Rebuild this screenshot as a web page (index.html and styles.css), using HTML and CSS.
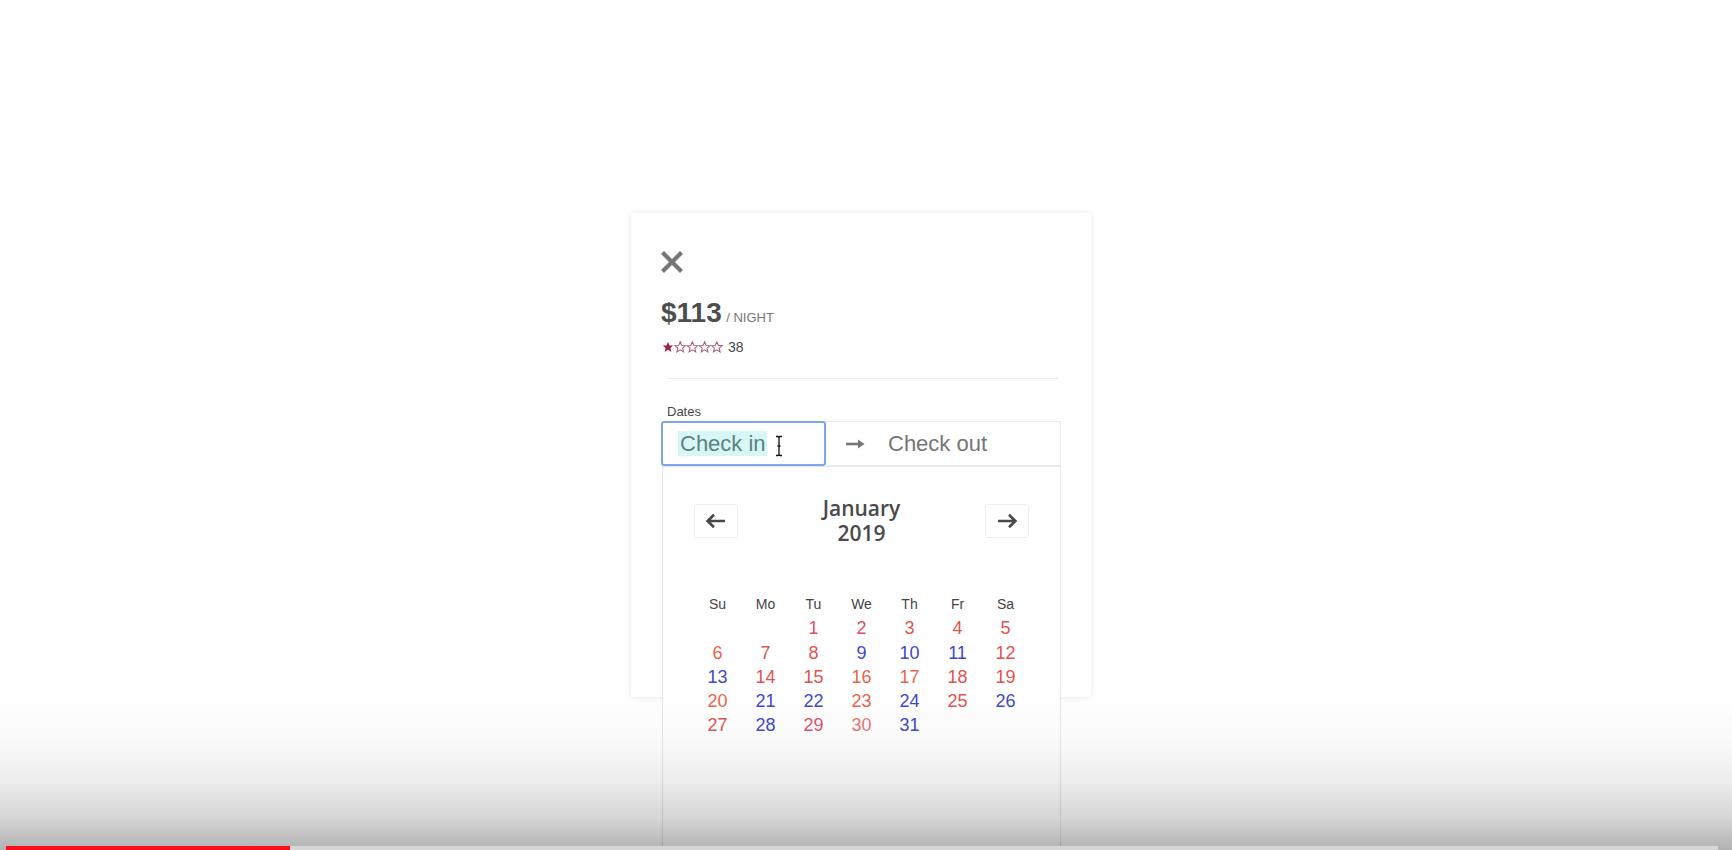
FILE: index.html
```html
<!DOCTYPE html>
<html>
<head>
<meta charset="utf-8">
<link rel="stylesheet" href="styles.css">
</head>
<body>
<div class="stage">
  <div class="card">
    <svg class="close" width="24" height="24" viewBox="0 0 24 24"><path d="M4 4 L20 20 M20 4 L4 20" stroke="#767676" stroke-width="4.2" stroke-linecap="square" fill="none"/></svg>
    <div class="price-line"><span class="price">$113</span> <span class="per">/ night</span></div>
    <div class="rating">
      <svg class="stars" width="61" height="12" viewBox="0 0 61 12">
        <defs><path id="st" d="M6 0.8 L7.5 4.4 L11.3 4.6 L8.4 7.1 L9.3 10.9 L6 8.8 L2.7 10.9 L3.6 7.1 L0.7 4.6 L4.5 4.4 Z"/></defs>
        <use href="#st" x="0" fill="#a3214f"/>
        <use href="#st" x="12.2" fill="none" stroke="#a8607a" stroke-width="1.05"/>
        <use href="#st" x="24.4" fill="none" stroke="#a8607a" stroke-width="1.05"/>
        <use href="#st" x="36.6" fill="none" stroke="#a8607a" stroke-width="1.05"/>
        <use href="#st" x="48.8" fill="none" stroke="#a8607a" stroke-width="1.05"/>
      </svg>
      <span class="count">38</span>
    </div>
    <div class="sep"></div>
    <div class="label">Dates</div>
    <div class="range">
      <div class="field checkin"><span class="sel">Check in</span></div>
      <div class="field checkout">
        <svg width="19" height="10" viewBox="0 0 19 10"><path d="M0 5 H14" stroke="#757575" stroke-width="2.6"/><path d="M12 0.5 L18.5 5 L12 9.5 Z" fill="#757575"/></svg>
        <span class="ph">Check out</span>
      </div>
      <svg class="ibeam" width="8" height="22" viewBox="0 0 8 22"><path d="M1 1.5 H3 Q4 1.5 4 3 Q4 1.5 5 1.5 H7 M4 3 V19 M1 20.5 H3 Q4 20.5 4 19 Q4 20.5 5 20.5 H7 M2 11 H6" stroke="#fff" stroke-width="3" fill="none"/><path d="M1 1.5 H3 Q4 1.5 4 3 Q4 1.5 5 1.5 H7 M4 3 V19 M1 20.5 H3 Q4 20.5 4 19 Q4 20.5 5 20.5 H7 M2.5 11 H5.5" stroke="#111" stroke-width="1.3" fill="none"/></svg>
      <div class="popup">
        <div class="cal-head">
          <div class="nav"><svg width="22" height="16" viewBox="0 0 22 16"><path d="M20 8 H3 M9 1.8 L2.6 8 L9 14.2" stroke="#484848" stroke-width="2.6" fill="none"/></svg></div>
          <div class="month"><span>January</span><span>2019</span></div>
          <div class="nav"><svg width="22" height="16" viewBox="0 0 22 16"><path d="M2 8 H19 M13 1.8 L19.4 8 L13 14.2" stroke="#484848" stroke-width="2.6" fill="none"/></svg></div>
        </div>
        <div class="grid">
          <span class="wd">Su</span><span class="wd">Mo</span><span class="wd">Tu</span><span class="wd">We</span><span class="wd">Th</span><span class="wd">Fr</span><span class="wd">Sa</span>
          <span></span><span></span>
          <span class="r1">1</span><span class="r1">2</span><span class="r2">3</span><span class="r2">4</span><span class="r2">5</span>
          <span class="r3">6</span><span class="r2">7</span><span class="r2">8</span><span class="b">9</span><span class="b">10</span><span class="b">11</span><span class="r2">12</span>
          <span class="b">13</span><span class="r2">14</span><span class="r2">15</span><span class="r3">16</span><span class="r3">17</span><span class="r2">18</span><span class="r2">19</span>
          <span class="r3">20</span><span class="b">21</span><span class="b">22</span><span class="r3">23</span><span class="b">24</span><span class="r2">25</span><span class="b">26</span>
          <span class="r2">27</span><span class="b">28</span><span class="r1">29</span><span class="r4">30</span><span class="b">31</span>
        </div>
      </div>
    </div>
  </div>
</div>
<div class="shade"></div>
<div class="progress"><div class="played"></div></div>
</body>
</html>
```
FILE: styles.css
```css
html, body {
  margin: 0;
  padding: 0;
}
body {
  width: 1732px;
  height: 850px;
  overflow: hidden;
  background: #fff;
  font-family: "Liberation Sans", Arial, sans-serif;
  color: #484848;
  position: relative;
}
.stage {
  padding: 213px 0 0 631px;
}
.card {
  width: 460px;
  height: 484px;
  box-sizing: border-box;
  padding: 37px 32px 0 30px;
  background: #fff;
  box-shadow: 0 0 6px rgba(0, 0, 0, 0.1);
}
.close {
  display: block;
  width: 24px;
  height: 24px;
  margin-left: -1px;
}
.price-line {
  margin-top: 23px;
  line-height: 32px;
  white-space: nowrap;
}
.price {
  font-size: 28px;
  font-weight: bold;
  color: #4e4e4e;
}
.per {
  font-size: 13px;
  text-transform: uppercase;
  color: #767676;
}
.rating {
  margin-top: 4px;
  height: 18px;
  display: flex;
  align-items: center;
  gap: 5px;
}
.stars {
  display: block;
  margin-left: 1px;
}
.count {
  font-size: 14px;
  line-height: 18px;
  color: #484848;
}
.sep {
  margin: 22px 1px 0 6px;
  height: 1px;
  background: #ebebeb;
}
.label {
  margin-top: 25px;
  padding-left: 6px;
  font-size: 13px;
  line-height: 16px;
  color: #484848;
}
.range {
  position: relative;
  width: 400px;
  display: flex;
  margin-top: 1px;
}
.field {
  height: 45px;
  box-sizing: border-box;
  display: flex;
  align-items: center;
  font-size: 22px;
}
.checkin {
  width: 165px;
  border: 2px solid #7ea4ec;
  border-radius: 3px;
  padding-left: 15px;
}
.sel {
  background: #d8f6f6;
  color: #5a8282;
  line-height: 25px;
  padding: 0 1px 0 2px;
}
.checkout {
  flex: 1;
  border: 1px solid #ebebeb;
  border-left: none;
  padding-left: 20px;
  gap: 23px;
}
.checkout svg {
  display: block;
}
.ph {
  color: #757575;
}
.ibeam {
  position: absolute;
  left: 114px;
  top: 14px;
}
.popup {
  position: absolute;
  left: 1px;
  top: 45px;
  width: 399px;
  height: 420px;
  box-sizing: border-box;
  border: 1px solid #e6e6e6;
  background: #fff;
  padding: 29px 31px 0 31px;
}
.cal-head {
  display: flex;
  justify-content: space-between;
  align-items: center;
}
.nav {
  width: 44px;
  height: 34px;
  box-sizing: border-box;
  border: 1px solid #efefef;
  border-radius: 3px;
  display: flex;
  align-items: center;
  justify-content: center;
}
.nav svg {
  display: block;
}
.month {
  display: flex;
  flex-direction: column;
  align-items: center;
  font-family: "Open Sans", "Liberation Sans", sans-serif;
  font-size: 21px;
  font-weight: 600;
  line-height: 25px;
  color: #4a4a4a;
}
.grid {
  margin-top: 46px;
  display: grid;
  grid-template-columns: repeat(7, 48px);
  grid-auto-rows: 24.3px;
  justify-content: center;
  margin-left: -1px;
  margin-right: -1px;
}
.grid span {
  text-align: center;
  font-size: 18px;
  line-height: 24px;
}
.grid .wd {
  font-size: 14px;
  color: #444;
}
.r1 { color: #dc5268; }
.r2 { color: #e05450; }
.r3 { color: #e9644c; }
.r4 { color: #e77474; }
.b { color: #3e48cc; }
.shade {
  position: absolute;
  left: 0;
  top: 690px;
  width: 1732px;
  height: 160px;
  pointer-events: none;
  background: linear-gradient(to bottom,
    rgba(0, 0, 0, 0) 0%,
    rgba(0, 0, 0, 0.02) 30%,
    rgba(0, 0, 0, 0.07) 56%,
    rgba(0, 0, 0, 0.17) 81%,
    rgba(0, 0, 0, 0.29) 97.5%,
    rgba(0, 0, 0, 0.3) 100%);
}
.progress {
  position: absolute;
  left: 6px;
  right: 14px;
  top: 846px;
  height: 4px;
  background: #d6d6d6;
}
.played {
  width: 284px;
  height: 4px;
  background: #fa0d1b;
}
```
